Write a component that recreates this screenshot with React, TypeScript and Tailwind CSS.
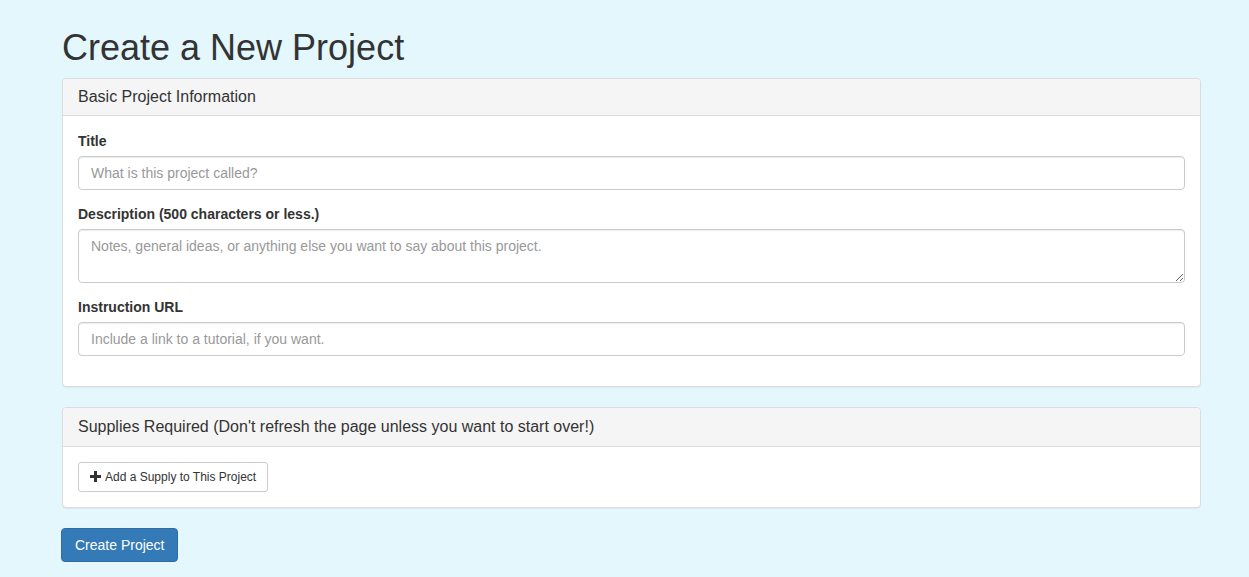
import React from 'react';

const inputClass =
  'block w-full h-[34px] px-3 py-1.5 text-sm leading-5 text-[#555] bg-white border border-[#ccc] rounded shadow-[inset_0_1px_1px_rgba(0,0,0,0.075)] placeholder:text-[#999] focus:outline-none';

const Panel: React.FC<{ title: string; headingPad?: string; children: React.ReactNode }> = ({
  title,
  headingPad = 'py-[10px]',
  children,
}) => (
  <div className="mb-5 bg-white border border-[#ddd] rounded shadow-[0_1px_1px_rgba(0,0,0,0.05)]">
    <div className={`px-[15px] ${headingPad} bg-[#f5f5f5] border-b border-[#ddd] rounded-t`}>
      <h3 className="text-base leading-4 text-[#333]">{title}</h3>
    </div>
    <div className="p-[15px]">{children}</div>
  </div>
);

const Field: React.FC<{ label: string; first?: boolean; children: React.ReactNode }> = ({
  label,
  first,
  children,
}) => (
  <div className="mb-[15px]">
    <label className={`block mb-[5px] font-bold text-sm leading-5 ${first ? '' : '-mt-px'}`}>{label}</label>
    {children}
  </div>
);

// glyphicon-plus
const PlusIcon = () => (
  <svg width="11" height="11" viewBox="0 0 11 11" className="inline-block mr-[4px] -mt-[2px] align-middle">
    <path d="M4 0h3v4h4v3H7v4H4V7H0V4h4z" fill="#333" />
  </svg>
);

export default function App() {
  return (
    <div className="min-h-[577px] bg-[#e3f7fd] text-[#333] text-sm leading-5 font-['Liberation_Sans',Arial,sans-serif]">
      <div className="pl-[62px] pr-[48px] pt-[28px] pb-5">
        <h1 className="text-[36px] leading-[1.1] font-medium mb-[10px]">Create a New Project</h1>

        <Panel title="Basic Project Information">
          <Field label="Title" first>
            <input type="text" className={inputClass} placeholder="What is this project called?" />
          </Field>
          <Field label="Description (500 characters or less.)">
            <textarea
              rows={2}
              className={`${inputClass} h-[54px]`}
              placeholder="Notes, general ideas, or anything else you want to say about this project."
            />
          </Field>
          <Field label="Instruction URL">
            <input type="text" className={inputClass} placeholder="Include a link to a tutorial, if you want." />
          </Field>
        </Panel>

        <Panel title="Supplies Required (Don't refresh the page unless you want to start over!)" headingPad="py-[11px]">
          <button className="px-[11px] py-[5px] text-xs leading-[18px] text-[#333] bg-white border border-[#ccc] rounded-[3px]">
            <PlusIcon />
            Add a Supply to This Project
          </button>
        </Panel>

        <button className="-ml-px px-[13px] py-1.5 text-sm leading-5 text-white bg-[#337ab7] border border-[#2e6da4] rounded">
          Create Project
        </button>
      </div>
    </div>
  );
}
